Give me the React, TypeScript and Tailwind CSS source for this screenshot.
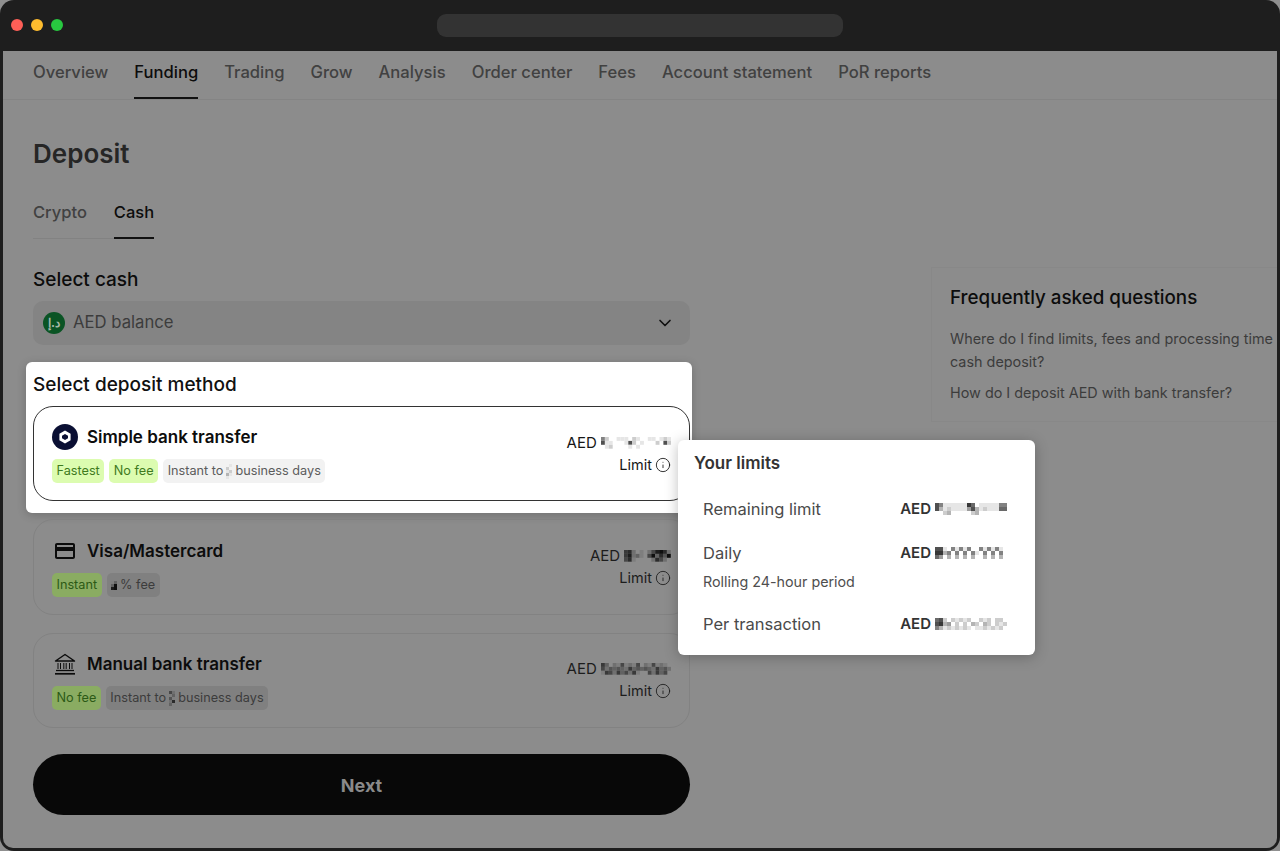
import { ChevronDown, Info } from 'lucide-react'

const tabs = ['Overview', 'Funding', 'Trading', 'Grow', 'Analysis', 'Order center', 'Fees', 'Account statement', 'PoR reports']

// censored amounts in the reference, each char is a cell darkness 0-9
const Pixels = ({ rows, cell = 4, dim = false }: { rows: string[]; cell?: number; dim?: boolean }) => (
  <svg width={rows[0].length * cell} height={rows.length * cell} className="shrink-0 blur-[0.5px]">
    {rows.map((row, y) =>
      row.split('').map((c, x) => {
        const level = Number(c) / 9
        if (level === 0) return null
        const v = Math.round(dim ? 140 - level * 125 : 255 - level * 225)
        return <rect key={`${x}-${y}`} x={x * cell} y={y * cell} width={cell} height={cell} fill={`rgb(${v},${v},${v})`} />
      })
    )}
  </svg>
)

const Badge = ({ children, green, dim }: { children: React.ReactNode; green?: boolean; dim?: boolean }) => {
  let cls = 'bg-[#f2f2f2] text-[#5c5c5c]'
  if (green && dim) cls = 'bg-[#8aac62] text-[#2c5a16]'
  if (green && !dim) cls = 'bg-[#dcfcb0] text-[#3f7a1e]'
  if (!green && dim) cls = 'bg-[#808080] text-[#3c3c3c]'
  return <span className={`flex h-6 items-center rounded-[5px] px-[4.5px] text-[12.7px] whitespace-nowrap ${cls}`}>{children}</span>
}

const Simple = () => (
  <svg width="26" height="26" viewBox="0 0 26 26" className="shrink-0">
    <circle cx="13" cy="13" r="13" fill="#0a0f33" />
    <path d="M13 6.5l5.6 3.2v6.6L13 19.5l-5.6-3.2V9.7z" fill="#fff" />
    <path d="M13 10l3 1.7v2.6L13 16l-3-1.7v-2.6z" fill="#0a0f33" />
  </svg>
)

const CardIcon = () => (
  <span className="flex h-[26px] w-[26px] shrink-0 items-center justify-center">
    <svg width="24" height="24" viewBox="0 0 24 24" fill="#0c0c0c">
      <path d="M20 4H4c-1.11 0-1.99.89-1.99 2L2 18c0 1.11.89 2 2 2h16c1.11 0 2-.89 2-2V6c0-1.11-.89-2-2-2zm0 14H4v-6h16v6zm0-10H4V6h16v2z" />
    </svg>
  </span>
)

const BankIcon = () => (
  <span className="flex h-[26px] w-[26px] shrink-0 items-center justify-center">
    <svg width="22" height="22" viewBox="0 0 22 22" fill="none" stroke="#0c0c0c">
      <path d="M1.5 8L11 1.5 20.5 8z" strokeWidth="1.4" strokeLinejoin="round" />
      <path d="M4 10v6M6.5 10v6M9.8 10v6M12.2 10v6M15.5 10v6M18 10v6" strokeWidth="1" />
      <path d="M2 17.5h18" strokeWidth="1.3" />
      <path d="M1 20.8h20" strokeWidth="1.7" />
    </svg>
  </span>
)

const Amount = ({ rows, dim }: { rows: string[]; dim?: boolean }) => (
  <div className="flex h-5 items-center justify-end gap-[4px]">
    <span className={`text-[15px] ${dim ? 'text-[#1c1c1c]' : 'text-[#161616]'}`}>AED</span>
    <Pixels rows={rows} dim={dim} cell={3.9} />
  </div>
)

const Limit = ({ dim }: { dim?: boolean }) => (
  <div className={`mt-[2px] flex h-5 items-center justify-end gap-[3px] text-[14.5px] ${dim ? 'text-[#1c1c1c]' : 'text-[#161616]'}`}>
    Limit
    <Info className="h-[16px] w-[16px]" strokeWidth={1.3} />
  </div>
)

const LimitRow = ({ label, rows, sub }: { label: string; rows: string[]; sub?: string }) => (
  <div>
    <div className="flex h-6 items-center justify-between">
      <span className="text-[16.5px] text-[#4a4a4a]">{label}</span>
      <div className="flex items-center gap-[4px]">
        <span className="text-[15px] font-semibold text-[#333333]">AED</span>
        <Pixels rows={rows} />
      </div>
    </div>
    {sub && <div className="mt-[6px] text-[14.3px] leading-[21px] text-[#4f4f4f]">{sub}</div>}
  </div>
)

export default function App() {
  return (
    <div className="h-[851px] w-[1280px] overflow-hidden bg-[#8f8f8f] font-['Inter',sans-serif]">
      <div className="flex h-full flex-col rounded-[14px] bg-[#1e1e1e] px-[3px] pb-[3px]">
        <div className="relative flex h-[51px] shrink-0 items-center justify-center">
          <div className="absolute left-[8px] top-[19px] flex gap-[8px]">
            <span className="h-[12px] w-[12px] rounded-full bg-[#fe5f57]" />
            <span className="h-[12px] w-[12px] rounded-full bg-[#febc2e]" />
            <span className="h-[12px] w-[12px] rounded-full bg-[#28c840]" />
          </div>
          <div className="-mt-[1px] h-[23px] w-[406px] rounded-[9px] bg-[#333333]" />
        </div>

        <div className="relative flex-1 overflow-hidden rounded-b-[10px] bg-[#8c8c8c]">
          <div className="flex h-[49px] gap-[26px] border-b border-[#848484] pl-[30px]">
            {tabs.map(tab => (
              <div
                key={tab}
                className={`flex h-[48px] items-center text-[16.6px] font-medium whitespace-nowrap ${
                  tab === 'Funding' ? 'border-b-2 border-[#111111] pb-[4px] text-[#0c0c0c]' : 'pb-[6px] text-[#414141]'
                }`}
              >
                {tab}
              </div>
            ))}
          </div>

          <div className="flex">
            <div className="ml-[30px] w-[657px] shrink-0">
              <h1 className="mt-[37px] text-[26px] leading-[34px] font-semibold text-[#262626]">Deposit</h1>
              <div className="mt-[27px] flex w-[121px] gap-[27px] border-b border-[#828282]">
                <div className="h-[40px] pt-[2px] text-[16.5px] font-medium text-[#414141]">Crypto</div>
                <div className="-mb-px h-[41px] border-b-2 border-[#111111] pt-[2px] text-[16.5px] font-medium text-[#0c0c0c]">Cash</div>
              </div>

              <div className="mt-[29px] text-[19px] leading-[24px] font-medium text-[#0c0c0c]">Select cash</div>
              <div className="mt-[9px] flex h-[44px] items-center justify-between rounded-[10px] bg-[#848484] pl-[10px] pr-[15px]">
                <div className="flex items-center gap-[8px]">
                  <span className="flex h-[22px] w-[22px] items-center justify-center rounded-full bg-[#0a5424] text-[12px] font-bold text-[#a8b8a8]">د.إ</span>
                  <span className="text-[16.7px] text-[#3c3c3c]">AED balance</span>
                </div>
                <ChevronDown className="h-[20px] w-[20px] text-[#111111]" strokeWidth={2} />
              </div>

              <div className="-ml-[7px] -mr-[2px] mt-[17px] h-[151px] rounded-[6px] bg-white pl-[7px] pr-[2px] shadow-[0_2px_10px_rgba(0,0,0,0.2)]">
                <div className="pt-[10px] text-[19px] leading-[26px] font-medium text-[#111111]">Select deposit method</div>
                <div className="mt-[8px] flex h-[95px] justify-between rounded-[20px] border border-[#333333] px-[18px] pt-[17px]">
                  <div>
                    <div className="flex h-[26px] items-center gap-[9px]">
                      <Simple />
                      <span className="pt-[2px] text-[17px] font-semibold text-[#0c0c0c]">Simple bank transfer</span>
                    </div>
                    <div className="mt-[9px] flex gap-[5px]">
                      <Badge green>Fastest</Badge>
                      <Badge green>No fee</Badge>
                      <Badge>
                        Instant to
                        <span className="mx-[3px] flex">
                          <Pixels cell={3} rows={['01', '20', '12', '31', '10']} />
                        </span>
                        business days
                      </Badge>
                    </div>
                  </div>
                  <div className="pt-[9px]">
                    <Amount rows={['520011102100110121', '711000172010002072', '012000010100000000']} />
                    <Limit />
                  </div>
                </div>
              </div>

              <div className="mt-[6px] flex h-[96px] justify-between rounded-[20px] border border-[#828282] px-[18px] pt-[18px]">
                <div>
                  <div className="flex h-[26px] items-center gap-[9px]">
                    <CardIcon />
                    <span className="pt-[2px] text-[17px] font-semibold text-[#0c0c0c]">Visa/Mastercard</span>
                  </div>
                  <div className="mt-[9px] flex gap-[5px]">
                    <Badge green dim>Instant</Badge>
                    <Badge dim>
                      <span className="flex">
                        <Pixels cell={3} dim rows={['130', '390', '890']} />
                      </span>
                      % fee
                    </Badge>
                  </div>
                </div>
                <div className="pt-[8px]">
                  <Amount dim rows={['672010258972', '682310593749', '571000027520']} />
                  <Limit dim />
                </div>
              </div>

              <div className="mt-[18px] flex h-[95px] justify-between rounded-[20px] border border-[#828282] px-[18px] pt-[17px]">
                <div>
                  <div className="flex h-[26px] items-center gap-[9px]">
                    <BankIcon />
                    <span className="pt-[2px] text-[17px] font-semibold text-[#0c0c0c]">Manual bank transfer</span>
                  </div>
                  <div className="mt-[9px] flex gap-[5px]">
                    <Badge green dim>No fee</Badge>
                    <Badge dim>
                      Instant to
                      <span className="mx-[3px] flex">
                        <Pixels cell={3} dim rows={['52', '13', '41', '27', '30']} />
                      </span>
                      business days
                    </Badge>
                  </div>
                </div>
                <div className="pt-[8px]">
                  <Amount dim rows={['630215121502151210', '524343263434326342', '165263526100526350']} />
                  <Limit dim />
                </div>
              </div>

              <div className="mt-[26px] flex h-[61px] items-center justify-center rounded-full bg-[#080808] pt-[2px] text-[18px] font-bold text-[#8a8a8a]">Next</div>
            </div>

            <div className="ml-[241px] mt-[167px] h-[155px] flex-1 border-y border-l border-[#888888] pl-[18px] pt-[17px]">
              <div className="text-[18.8px] leading-[26px] font-medium text-[#0c0c0c]">Frequently asked questions</div>
              <div className="mt-[16px] text-[14.4px] leading-[23px] whitespace-nowrap text-[#3c3c3c]">
                Where do I find limits, fees and processing time
                <br />
                cash deposit?
              </div>
              <div className="mt-[8px] text-[14.4px] leading-[23px] whitespace-nowrap text-[#3c3c3c]">How do I deposit AED with bank transfer?</div>
            </div>
          </div>

          <div className="absolute left-[675px] top-[389px] h-[215px] w-[357px] rounded-[6px] bg-white pl-[16px] pr-[28px] pt-[12px] shadow-[0_2px_14px_rgba(0,0,0,0.25)]">
            <div className="text-[17px] leading-[22px] font-semibold text-[#333333]">Your limits</div>
            <div className="mt-[23px] flex flex-col gap-[20px] pl-[9px]">
              <LimitRow label="Remaining limit" rows={['751111118601111155', '731211114731211166', '002300000230000000']} />
              <LimitRow label="Daily" sub="Rolling 24-hour period" rows={['771051515005151510', '883505050510505050', '640303030300303030']} />
              <LimitRow label="Per transaction" rows={['672021212002120220', '783402020320320212', '531212121011212120']} />
            </div>
          </div>
        </div>
      </div>
    </div>
  )
}
